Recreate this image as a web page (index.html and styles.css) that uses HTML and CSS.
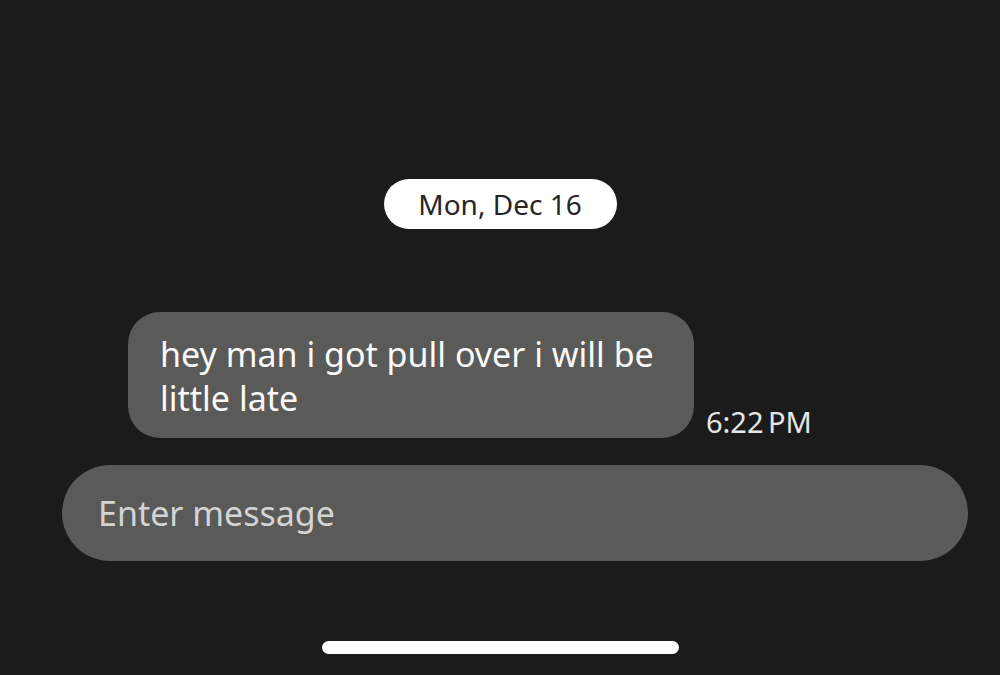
FILE: index.html
```html
<!DOCTYPE html>
<html>
<head>
  <title>Messages</title>
  <link rel="stylesheet" href="styles.css">
</head>
<body>
  <div class="screen">
    <div class="date-row">
      <span class="date-pill">Mon, Dec 16</span>
    </div>

    <div class="message-row">
      <div class="bubble">hey man i got pull over i will be little late</div>
      <span class="time">6:22 PM</span>
    </div>

    <div class="composer">
      <span class="placeholder">Enter message</span>
    </div>

    <div class="home-row">
      <div class="home-bar"></div>
    </div>
  </div>
</body>
</html>
```

FILE: styles.css
```css
html, body {
  margin: 0;
  height: 100%;
  background-color: #1b1b1b;
}

body {
  font-family: "Noto Sans", "Open Sans", sans-serif;
  overflow: hidden;
}

.screen {
  display: flex;
  flex-direction: column;
  height: 675px;
}

.date-row {
  display: flex;
  justify-content: center;
  margin-top: 179px;
}

.date-pill {
  display: flex;
  align-items: center;
  justify-content: center;
  width: 233px;
  height: 50px;
  border-radius: 25px;
  background-color: #fff;
  color: #262626;
  font-size: 28px;
}

.message-row {
  display: flex;
  align-items: flex-end;
  gap: 12px;
  margin-top: 83px;
  padding-left: 128px;
}

.bubble {
  box-sizing: border-box;
  width: 566px;
  height: 126px;
  padding: 20px 20px 0 32px;
  border-radius: 32px;
  background-color: #5a5a59;
  color: #fafafa;
  font-size: 34px;
  line-height: 44px;
}

.time {
  color: #e6e6e6;
  font-size: 29px;
  line-height: 29px;
  margin-bottom: 2px;
  word-spacing: -3px;
}

.composer {
  display: flex;
  align-items: center;
  box-sizing: border-box;
  width: 906px;
  height: 96px;
  margin-top: 27px;
  margin-left: 62px;
  padding-left: 36px;
  border-radius: 48px;
  background-color: #5a5a59;
}

.placeholder {
  color: #d4d4d4;
  font-size: 34px;
}

.home-row {
  display: flex;
  justify-content: center;
  margin-top: 80px;
}

.home-bar {
  width: 357px;
  height: 13px;
  border-radius: 7px;
  background-color: #fff;
}
```
